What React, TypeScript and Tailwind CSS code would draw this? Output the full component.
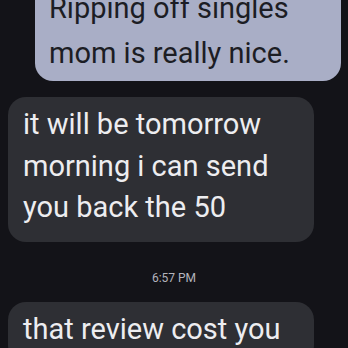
export default function App() {
  return (
    <div
      className="flex h-[348px] w-[348px] flex-col overflow-hidden bg-[#131318]"
      style={{ fontFamily: "Roboto, 'Noto Sans', sans-serif" }}
    >
      {/* sent */}
      <div className="ml-[35px] mt-[-21px] w-[306px] rounded-[18px] bg-[#a9aec6] pl-[14px] pt-[7px] pb-[5px] text-[29px] leading-[45px] text-[#1c1d24]">
        Ripping off singles
        <br />
        mom is really nice.
      </div>

      {/* received */}
      <div className="ml-[8px] mt-[16px] w-[306px] rounded-[18px] bg-[#2e2f34] pl-[15px] pt-[7px] pb-[13px] text-[29px] leading-[41.5px] text-[#ededf0]">
        it will be tomorrow
        <br />
        morning i can send
        <br />
        you back the 50
      </div>

      <div className="mt-[28px] text-center text-[12px] leading-[16px] text-[#b4b4bc]">6:57 PM</div>

      <div className="ml-[8px] mt-[16px] w-[306px] rounded-[18px] bg-[#2e2f34] pl-[15px] pt-[7px] pb-[13px] text-[29px] leading-[41.5px] text-[#ededf0]">
        that review cost you
      </div>
    </div>
  );
}
